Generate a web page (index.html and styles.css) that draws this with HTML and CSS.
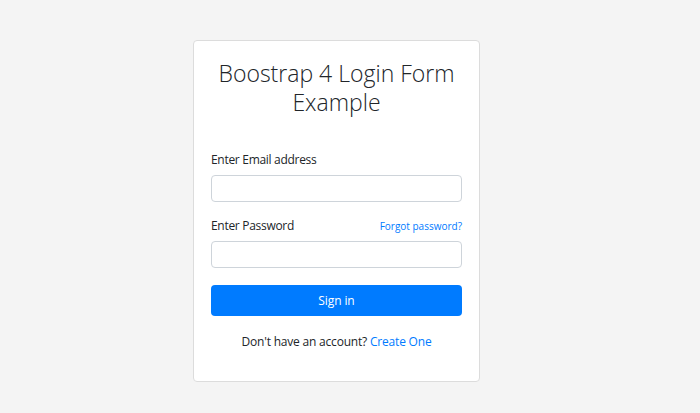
FILE: index.html
```html
<!DOCTYPE html>
<html>
<head>
<meta charset="utf-8">
<link rel="stylesheet" href="styles.css">
</head>
<body>
<div class="page">
  <div class="wrap">
    <div class="card">
      <h1 class="title">Boostrap 4 Login Form Example</h1>
      <form class="form">
        <div class="group">
          <div class="label-row"><label class="label">Enter Email address</label></div>
          <input class="input" type="email">
        </div>
        <div class="group">
          <div class="label-row">
            <label class="label">Enter Password</label>
            <a class="forgot" href="#">Forgot password?</a>
          </div>
          <input class="input" type="password">
        </div>
        <button class="btn" type="button">Sign in</button>
        <p class="signup">Don't have an account? <a class="link" href="#">Create One</a></p>
      </form>
    </div>
  </div>
</div>
</body>
</html>
```
FILE: styles.css
```css
* { box-sizing: border-box; }
html, body { margin: 0; padding: 0; }
body {
  background: #f4f4f4;
  font-family: "Open Sans", "Noto Sans", sans-serif;
  color: #212529;
  font-size: 12px;
}
.page {
  display: flex;
  justify-content: center;
  padding-top: 40px;
}
.wrap { width: 314px; }
.card {
  width: 287px;
  height: 342px;
  background: #fff;
  border: 1px solid #dcdcdc;
  border-radius: 4px;
  padding: 18px 17px 0;
}
.title {
  margin: 0;
  font-weight: 300;
  font-size: 23px;
  line-height: 29px;
  text-align: center;
  color: #212529;
}
.form { margin-top: 34px; display: flex; flex-direction: column; }
.group { display: flex; flex-direction: column; margin-bottom: 15px; }
.group:last-of-type { margin-bottom: 17px; }
.label-row {
  display: flex;
  justify-content: space-between;
  align-items: baseline;
  margin-bottom: 6px;
  line-height: 18px;
}
.label { font-size: 12px; letter-spacing: -0.3px; }
.forgot { font-size: 10px; color: #007bff; text-decoration: none; }
.input {
  height: 27px;
  border: 1px solid #ced4da;
  border-radius: 4px;
  background: #fff;
  font: inherit;
}
.btn {
  height: 31px;
  border: none;
  border-radius: 4px;
  background: #007bff;
  color: #fff;
  font: inherit;
  font-size: 12px;
  letter-spacing: -0.1px;
}
.signup { text-align: center; margin: 17px 0 0; line-height: 18px; letter-spacing: -0.2px; }
.link { color: #007bff; text-decoration: none; }
```
